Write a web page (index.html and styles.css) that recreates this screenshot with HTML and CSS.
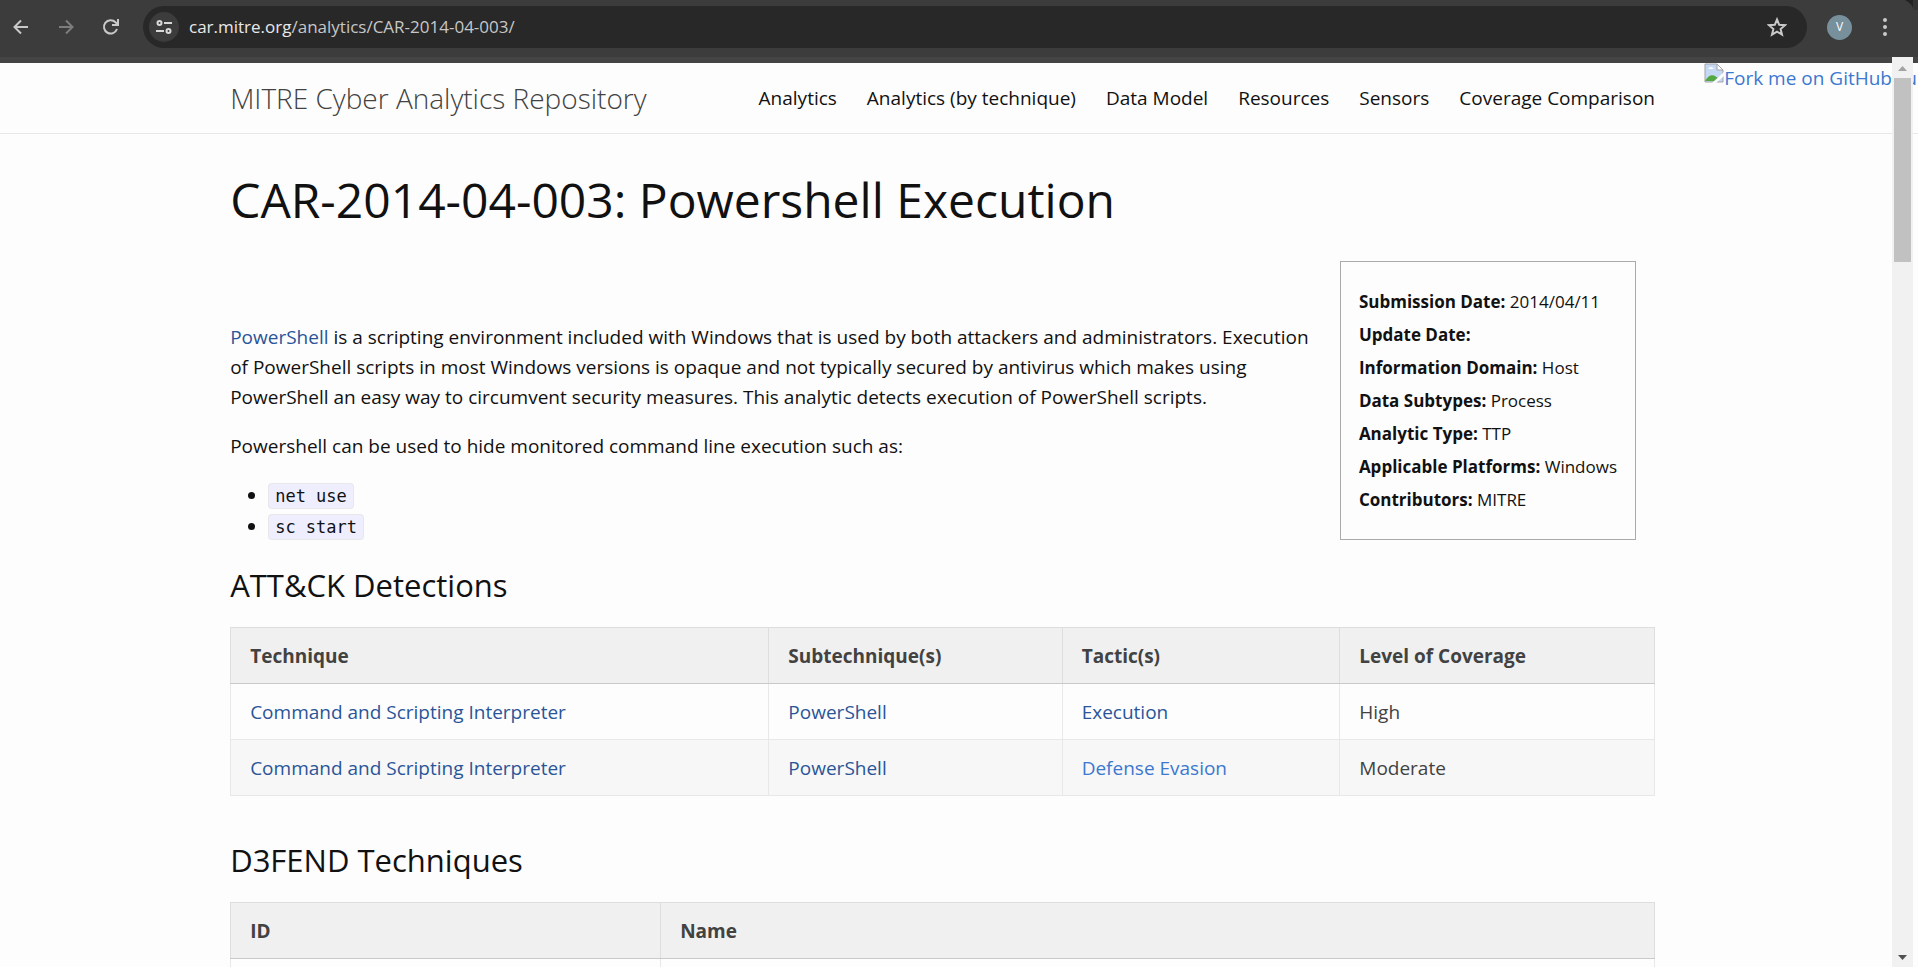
FILE: index.html
```html
<!DOCTYPE html>
<html lang="en">
<head>
<meta charset="utf-8">
<title>CAR-2014-04-003: Powershell Execution</title>
<link rel="stylesheet" href="styles.css">
</head>
<body>
<div class="toolbar">
  <div class="tools">
    <button class="tool-btn" type="button" aria-label="Back"><svg width="18" height="18" viewBox="0 0 18 18"><path d="M16 9H3M9 2.500L2.500 9L9 15.500" fill="none" stroke="#c9c9c9" stroke-width="2"/></svg></button>
    <button class="tool-btn" type="button" aria-label="Forward"><svg width="18" height="18" viewBox="0 0 18 18"><path d="M2 9H15M9 2.500L15.500 9L9 15.500" fill="none" stroke="#7d7d7d" stroke-width="2"/></svg></button>
    <button class="tool-btn" type="button" aria-label="Reload"><svg width="18" height="18" viewBox="0 0 18 18"><path d="M15 11A6.700 6.700 0 1 1 13.500 4.200L16 6.500" fill="none" stroke="#c9c9c9" stroke-width="2"/><path d="M16 1V7H10" fill="none" stroke="#c9c9c9" stroke-width="2"/></svg></button>
  </div>
  <div class="omnibox">
    <button class="site-info" type="button" aria-label="Site information"><svg width="18" height="18" viewBox="0 0 18 18" fill="none" stroke="#d8d8d8" stroke-width="2"><circle cx="4.500" cy="5" r="2"/><path d="M9 5H17M1 13H9"/><circle cx="13.500" cy="13" r="2"/></svg></button>
    <div class="address"><span class="host">car.mitre.org</span>/analytics/CAR-2014-04-003/</div>
    <button class="star" type="button" aria-label="Bookmark"><svg width="20" height="20" viewBox="0 0 20 20"><path d="M10 2.500L12.200 7.800L18 8.200L13.600 12L15 17.600L10 14.600L5 17.600L6.400 12L2 8.200L7.800 7.800Z" fill="none" stroke="#c9c9c9" stroke-width="2"/></svg></button>
  </div>
  <button class="avatar" type="button">V</button>
  <button class="menu" type="button" aria-label="Menu"><svg width="4" height="18" viewBox="0 0 4 18" fill="#c9c9c9"><circle cx="2" cy="2" r="2"/><circle cx="2" cy="9" r="2"/><circle cx="2" cy="16" r="2"/></svg></button>
</div>
<svg class="corner" width="14" height="10" viewBox="0 0 14 10"><path d="M1 0H9V8Q7 3 1 0Z" fill="#222"/><path d="M9 0H14V10H9Z" fill="#333"/></svg>
<div class="view">
  <header class="site-header">
    <div class="wrapper header-row">
      <a class="site-title" href="#">MITRE Cyber Analytics Repository</a>
      <nav class="site-nav">
        <a href="#">Analytics</a>
        <a href="#">Analytics (by technique)</a>
        <a href="#">Data Model</a>
        <a href="#">Resources</a>
        <a href="#">Sensors</a>
        <a href="#">Coverage Comparison</a>
      </nav>
    </div>
  </header>
  <a class="fork" href="#"><svg width="20" height="20" viewBox="0 0 20 20"><path d="M1 1H13L19 7V19H1Z" fill="#c5d8f5" stroke="#a3a3a3"/><path d="M13 1V7H19Z" fill="#fff" stroke="#a3a3a3"/><path d="M4 6Q7 2 10 6Z" fill="#fff"/><path d="M1 18Q5 11 10 12.500L14 15V18Z" fill="#52a843"/><path d="M8 20L20 9V13L12 20Z" fill="#fdfdfd"/></svg>Fork me on GitHub</a>
  <div class="fork-edge" aria-hidden="true">u</div>
  <main class="wrapper content">
    <h1>CAR-2014-04-003: Powershell Execution</h1>
    <div class="intro">
      <div class="prose">
        <p><a href="#">PowerShell</a> is a scripting environment included with Windows that is used by both attackers and administrators. Execution of PowerShell scripts in most Windows versions is opaque and not typically secured by antivirus which makes using PowerShell an easy way to circumvent security measures. This analytic detects execution of PowerShell scripts.</p>
        <p>Powershell can be used to hide monitored command line execution such as:</p>
        <ul>
          <li><code>net use</code></li>
          <li><code>sc start</code></li>
        </ul>
      </div>
      <aside class="facts">
        <div><b>Submission Date:</b> 2014/04/11</div>
        <div><b>Update Date:</b></div>
        <div><b>Information Domain:</b> Host</div>
        <div><b>Data Subtypes:</b> Process</div>
        <div><b>Analytic Type:</b> TTP</div>
        <div><b>Applicable Platforms:</b> Windows</div>
        <div><b>Contributors:</b> MITRE</div>
      </aside>
    </div>
    <h2>ATT&amp;CK Detections</h2>
    <table class="detections">
      <thead><tr><th>Technique</th><th>Subtechnique(s)</th><th>Tactic(s)</th><th>Level of Coverage</th></tr></thead>
      <tbody>
        <tr><td><a href="#">Command and Scripting Interpreter</a></td><td><a href="#">PowerShell</a></td><td><a href="#">Execution</a></td><td>High</td></tr>
        <tr><td><a href="#">Command and Scripting Interpreter</a></td><td><a href="#">PowerShell</a></td><td><a class="fresh" href="#">Defense Evasion</a></td><td>Moderate</td></tr>
      </tbody>
    </table>
    <h2>D3FEND Techniques</h2>
    <table class="defend">
      <thead><tr><th>ID</th><th>Name</th></tr></thead>
      <tbody><tr><td>&nbsp;</td><td>&nbsp;</td></tr></tbody>
    </table>
  </main>
</div>
<div class="scrollbar">
  <svg width="21" height="21" viewBox="0 0 21 21"><path d="M6 14L10.500 9L15 14Z" fill="#a3a3a3"/></svg>
  <div class="thumb"></div>
  <svg class="down" width="21" height="21" viewBox="0 0 21 21"><path d="M6 9L10.500 14L15 9Z" fill="#505050"/></svg>
</div>
</body>
</html>
```
FILE: styles.css
```css
* { box-sizing: border-box; }
html, body { margin: 0; height: 100%; }
body {
  display: flex;
  flex-direction: column;
  overflow: hidden;
  position: relative;
  background: #fdfdfd;
  color: #111;
  font: 19px/30px "Open Sans", "Noto Sans", sans-serif;
}
a { color: #2a5598; text-decoration: none; }
button { border: 0; padding: 0; background: none; font: inherit; display: flex; align-items: center; justify-content: center; }

.toolbar {
  flex: none;
  height: 63px;
  padding: 6px 31px 15px 12px;
  display: flex;
  align-items: center;
  background: linear-gradient(#3c3c3c 57px, #444 57px);
}
.tools { display: flex; gap: 27px; margin-right: 23px; }
.tool-btn { width: 18px; height: 18px; }
.omnibox {
  flex: 1;
  height: 42px;
  border-radius: 21px;
  background: #282828;
  display: flex;
  align-items: center;
  padding: 0 20px 0 6px;
}
.site-info { width: 30px; height: 30px; border-radius: 50%; background: #3c3c3c; }
.address { flex: 1; margin-left: 10px; font-size: 17px; color: #c7c7c7; }
.host { color: #e8e8e8; }
.avatar { width: 25px; height: 25px; margin: 0 31px 0 20px; border-radius: 50%; background: #78909c; color: #fff; font-size: 12px; }
.menu { width: 4px; }
.corner { position: absolute; top: 0; right: 0; }

.view { flex: 1; min-height: 0; overflow: hidden; position: relative; }
.wrapper { margin-left: 12%; margin-right: 263px; }
.site-header { height: 71px; border-bottom: 1px solid #e8e8e8; }
.header-row { display: flex; justify-content: space-between; align-items: center; height: 70px; }
.site-title { font-size: 28px; font-weight: 300; color: #424242; }
.site-nav { display: flex; gap: 30px; }
.site-nav a { color: #111; }
.fork { position: absolute; top: 0; right: 26px; display: flex; color: #3c78d0; white-space: nowrap; }
.fork-edge { position: absolute; top: 0; right: 0; width: 5px; overflow: hidden; display: flex; justify-content: flex-end; padding-right: 1px; color: #3c78d0; }

.content { padding-top: 30px; }
h1 { margin: 0; font-size: 48px; line-height: 72px; font-weight: 400; }
.intro { display: flex; align-items: flex-start; margin-top: 25px; }
.prose { flex: 1; padding-top: 61px; }
.prose p { margin: 0 0 19px; }
.prose ul { margin: 0; padding-left: 38px; }
.prose li { height: 31px; line-height: 31px; }
code { font: 17px/24px "DejaVu Sans Mono", monospace; padding: 2px 6px; border: 1px solid #e8e8e8; border-radius: 4px; background: #eef; }
.facts { margin: 0 19px 0 28px; padding: 23px 18px; border: 1px solid #aaa; font-size: 17px; line-height: 33px; white-space: nowrap; }

h2 { margin: 21px 0 20px; font-size: 31px; line-height: 44px; font-weight: 400; }
table { width: 100%; table-layout: fixed; border-collapse: collapse; color: #424242; border: 1px solid #e8e8e8; }
th, td { height: 56px; padding: 0 19px; text-align: left; border: 1px solid #e8e8e8; }
th { background: #f0f0f0; border-color: #dedede; border-bottom-color: #c9c9c9; font-weight: 700; }
tbody tr:nth-child(even) { background: #f7f7f7; }
.fresh { color: #3c78d0; }
.detections { margin-bottom: 42px; }
.detections th:nth-child(1) { width: 37.8%; }
.detections th:nth-child(2) { width: 20.6%; }
.detections th:nth-child(3) { width: 19.5%; }
.defend th:first-child { width: 30.2%; }

.scrollbar { position: absolute; right: 5px; top: 57px; bottom: 0; width: 21px; background: #f1f1f1; display: flex; flex-direction: column; align-items: center; }
.thumb { width: 17px; height: 184px; background: #c1c1c1; }
.down { margin-top: auto; }
```
